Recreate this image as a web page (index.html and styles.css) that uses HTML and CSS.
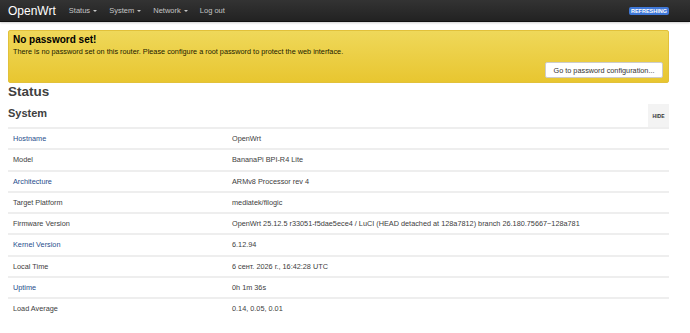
FILE: index.html
```html
<!DOCTYPE HTML>
<html>
<head>
    <title>OpenWrt - Overview - LuCI</title>
    <link rel="stylesheet" href="styles.css">
</head>
<body>
<header class="topbar">
    <a href="#" class="brand">OpenWrt</a>
    <ul class="nav">
        <li><a href="#">Status <span class="caret"></span></a></li>
        <li><a href="#">System <span class="caret"></span></a></li>
        <li><a href="#">Network <span class="caret"></span></a></li>
        <li><a href="#">Log out</a></li>
    </ul>
    <div class="indicators">
        <span class="label-refresh">REFRESHING</span>
    </div>
</header>
<div class="main">
    <div class="alert-warning">
        <h4>No password set!</h4>
        <p>There is no password set on this router. Please configure a root password to protect the web interface.</p>
        <div class="alert-actions">
            <button class="btn">Go to password configuration...</button>
        </div>
    </div>
    <h2>Status</h2>
    <div class="section-head">
        <h3>System</h3>
        <button class="btn-hide">HIDE</button>
    </div>
    <table class="table">
        <tr><td class="key link">Hostname</td><td>OpenWrt</td></tr>
        <tr><td class="key">Model</td><td>BananaPi BPI-R4 Lite</td></tr>
        <tr><td class="key link">Architecture</td><td>ARMv8 Processor rev 4</td></tr>
        <tr><td class="key">Target Platform</td><td>mediatek/filogic</td></tr>
        <tr><td class="key">Firmware Version</td><td>OpenWrt 25.12.5 r33051-f5dae5ece4 / LuCI (HEAD detached at 128a7812) branch 26.180.75667~128a781</td></tr>
        <tr><td class="key link">Kernel Version</td><td>6.12.94</td></tr>
        <tr><td class="key">Local Time</td><td>6 сент. 2026 г., 16:42:28 UTC</td></tr>
        <tr><td class="key link">Uptime</td><td>0h 1m 36s</td></tr>
        <tr><td class="key">Load Average</td><td>0.14, 0.05, 0.01</td></tr>
    </table>
</div>
</body>
</html>
```

FILE: styles.css
```css
body {
    margin: 0;
    font-family: "Liberation Sans", Arial, sans-serif;
    font-size: 8px;
    color: #404040;
    background: #fff;
}

.topbar {
    display: flex;
    align-items: center;
    height: 21px;
    padding: 0 8px;
    background: linear-gradient(#333, #222);
    border-bottom: 1px solid #111;
    box-shadow: 0 1px 2px rgba(0, 0, 0, 0.2);
}

.brand {
    color: #fff;
    text-decoration: none;
    font-size: 12px;
    margin-right: 13px;
}

.nav {
    display: flex;
    list-style: none;
    margin: 0;
    padding: 0;
    gap: 12px;
}

.nav a {
    color: #c4c4c4;
    text-decoration: none;
    font-size: 7.5px;
}

.caret {
    display: inline-block;
    width: 0;
    height: 0;
    margin-left: 1px;
    vertical-align: middle;
    border-left: 2px solid transparent;
    border-right: 2px solid transparent;
    border-top: 2px solid #c4c4c4;
}

.indicators {
    margin-left: auto;
    margin-right: 13px;
}

.label-refresh {
    display: inline-block;
    background: #3f78d8;
    color: #fff;
    font-size: 5.5px;
    font-weight: bold;
    padding: 1px 2px;
    border-radius: 2px;
}

.main {
    padding: 8px 21px 0 8px;
}

.alert-warning {
    background: linear-gradient(#efd85a, #e8c630);
    border: 1px solid #e2c13a;
    border-radius: 2px;
    padding: 3px 5px 4px 4px;
    color: #1a1a00;
}

.alert-warning h4 {
    margin: 0;
    font-size: 10px;
    color: #000;
}

.alert-warning p {
    margin: 2px 0 0 0;
    font-size: 7.3px;
}

.alert-actions {
    display: flex;
    justify-content: flex-end;
    margin-top: 6px;
}

.btn {
    background: #fff;
    border: 1px solid #ccc;
    border-radius: 2px;
    padding: 0 5px;
    font-family: "Liberation Sans", Arial, sans-serif;
    font-size: 7.3px;
    color: #333;
    width: 118px;
    height: 16px;
    white-space: nowrap;
}

h2 {
    margin: 1px 0 0 0;
    font-size: 13.5px;
    color: #404040;
}

.section-head {
    display: flex;
    align-items: flex-end;
    justify-content: space-between;
    margin-top: 5px;
}

h3 {
    margin: 0 0 8px 0;
    font-size: 11px;
    color: #404040;
}

.btn-hide {
    background: #f3f3f3;
    border: none;
    width: 21px;
    height: 23px;
    padding: 0;
    font-family: "Liberation Sans", Arial, sans-serif;
    font-size: 5px;
    font-weight: bold;
    color: #333;
}

.table {
    width: 100%;
    border-collapse: collapse;
}

.table td {
    border-top: 2px solid #eee;
    height: 19.25px;
    padding: 0 5px;
    font-size: 7.3px;
    color: #404040;
}

.table .key {
    width: 209px;
}

.table .link {
    color: #1f4e8c;
}
```
